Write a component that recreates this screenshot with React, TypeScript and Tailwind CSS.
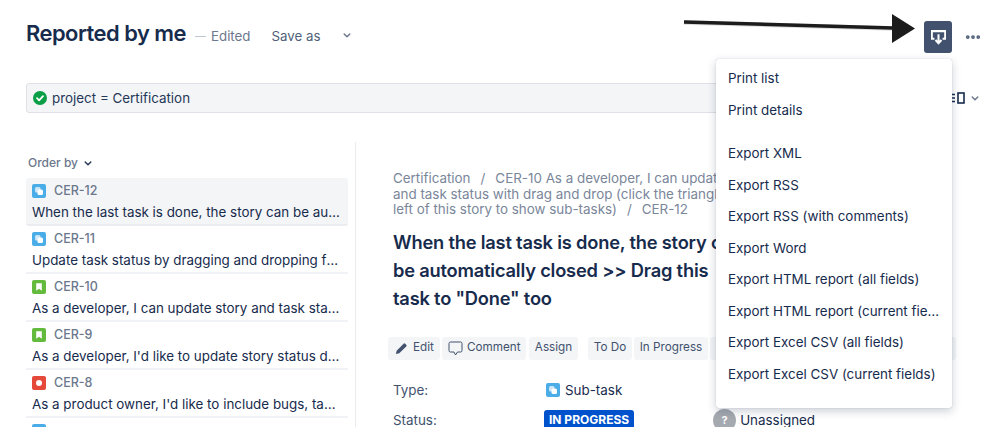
import { MoreHorizontal } from "lucide-react";

const font = "font-['Inter','Noto_Sans',sans-serif]";

type IssueRow = { id: string; title: string; type: "subtask" | "story" | "bug"; selected?: boolean };

const issues: IssueRow[] = [
  { id: "CER-12", title: "When the last task is done, the story can be automatically closed", type: "subtask", selected: true },
  { id: "CER-11", title: "Update task status by dragging and dropping from column", type: "subtask" },
  { id: "CER-10", title: "As a developer, I can update story and task status with drag", type: "story" },
  { id: "CER-9", title: "As a developer, I'd like to update story status during the sprint", type: "story" },
  { id: "CER-8", title: "As a product owner, I'd like to include bugs, tasks and other", type: "bug" },
  { id: "", title: "", type: "subtask" },
];

const menuGroups = [
  ["Print list", "Print details"],
  [
    "Export XML",
    "Export RSS",
    "Export RSS (with comments)",
    "Export Word",
    "Export HTML report (all fields)",
    "Export HTML report (current fields)",
    "Export Excel CSV (all fields)",
    "Export Excel CSV (current fields)",
  ],
];

function Chevron({ className }: { className: string }) {
  return (
    <svg viewBox="0 0 10 6" className={className} fill="none" stroke="currentColor" strokeWidth="1.8" strokeLinecap="round" strokeLinejoin="round">
      <path d="M1.5 1.2 5 4.7l3.5-3.5" />
    </svg>
  );
}

function IssueIcon({ type }: { type: IssueRow["type"] }) {
  const size = "h-[14px] w-[14px] shrink-0";
  if (type === "story") {
    return (
      <svg viewBox="0 0 14 14" className={size}>
        <rect width="14" height="14" rx="2" fill="#63ba3c" />
        <path d="M4.2 3.2h5.6v7.6L7 8.8l-2.8 2z" fill="#fff" />
      </svg>
    );
  }
  if (type === "bug") {
    return (
      <svg viewBox="0 0 14 14" className={size}>
        <rect width="14" height="14" rx="2" fill="#e5493a" />
        <circle cx="7" cy="7" r="3" fill="#fff" />
      </svg>
    );
  }
  return (
    <svg viewBox="0 0 14 14" className={size}>
      <rect width="14" height="14" rx="2" fill="#4bade8" />
      <rect x="3" y="3" width="5.5" height="5.5" rx="1.5" fill="#fff" fillOpacity="0.7" />
      <rect x="5.5" y="5.5" width="5.5" height="5.5" rx="1.5" fill="#fff" />
    </svg>
  );
}

function ToolButton({ children, className = "" }: { children?: React.ReactNode; className?: string }) {
  return (
    <div className={`flex h-[23px] shrink-0 items-center rounded-[3px] bg-[#f4f5f7] text-[11.7px] text-[#42526e] ${className}`}>
      {children}
    </div>
  );
}

export default function App() {
  return (
    <div className={`${font} relative h-[427px] w-[999px] overflow-hidden bg-white text-[#172b4d]`}>
      {/* header */}
      <div className="flex h-[83px] items-start pl-[26px] pt-[17px]">
        <h1 className="w-[161px] whitespace-nowrap text-[21.9px] font-semibold leading-[32px] tracking-[-0.5px] text-[#172b4d]">Reported by me</h1>
        <div className="ml-[8px] mt-[10px] h-px w-[11px] translate-y-[9px] bg-[#c1c7d0]" />
        <span className="ml-[5px] mt-[10px] text-[13.3px] leading-[18px] text-[#6b778c]">Edited</span>
        <span className="ml-[21px] mt-[10px] text-[13.3px] leading-[18px] text-[#505f79]">Save as</span>
        <Chevron className="ml-[23px] mt-[16px] h-[5px] w-[8px] text-[#6b778c]" />
      </div>

      {/* jql bar */}
      <div className="flex items-center">
        <div className="ml-[26px] flex h-[30px] w-[900px] items-center gap-[5px] rounded-[3px] border border-[#dfe1e6] bg-[#f4f5f7] pl-[6px] text-[13.4px] leading-[28px] text-[#253858]">
          <svg viewBox="0 0 14 14" className="h-[14px] w-[14px]">
            <circle cx="7" cy="7" r="7" fill="#0a9e46" />
            <path d="M4 7.2l2.1 2.1L10 5.2" fill="none" stroke="#fff" strokeWidth="1.8" strokeLinecap="round" strokeLinejoin="round" />
          </svg>
          project = Certification
        </div>
        <svg viewBox="0 0 14 12" className="ml-[26px] h-[12px] w-[14px] text-[#172b4d]" fill="none" stroke="currentColor">
          <path d="M0 2.5h3M0 6h3M0 9.5h3" strokeWidth="1.4" />
          <rect x="6" y="1" width="6" height="10" strokeWidth="1.6" />
        </svg>
        <Chevron className="ml-[5px] h-[5px] w-[8px] text-[#6b778c]" />
      </div>

      {/* body */}
      <div className="mt-[29px] flex">
        <div className="ml-[26px] w-[322px] shrink-0">
          <div className="flex h-[36px] items-center gap-[6px] pl-[2px] pt-[6px] text-[12px] font-medium text-[#6b778c]">
            Order by
            <Chevron className="h-[5px] w-[8px] text-[#253858]" />
          </div>
          {issues.map((row, i) => (
            <div
              key={i}
              className={`h-[48px] border-b-2 px-[6px] pt-[6px] ${row.selected ? "rounded-[3px] border-[#ebecf0] bg-[#f4f5f7]" : "border-[#f1f2f5]"}`}
            >
              <div className="flex h-[14px] items-center gap-[8px]">
                <IssueIcon type={row.type} />
                <span className="text-[12.5px] font-medium text-[#6b778c]">{row.id}</span>
              </div>
              <div className="mt-[5px] truncate text-[13.4px] leading-[18px] text-[#172b4d]">{row.title}</div>
            </div>
          ))}
        </div>

        <div className="ml-[7px] h-[300px] w-px shrink-0 bg-[#ebecf0]" />

        <div className="ml-[37px] w-[570px] shrink-0 pt-[29px]">
          <div className="w-[323px] whitespace-nowrap text-[13.4px] leading-[15.5px] text-[#7a869a]">
            <div>Certification<span className="mx-[10px]">/</span>CER-10 As a developer, I can update</div>
            <div>and task status with drag and drop (click the triangle</div>
            <div>left of this story to show sub-tasks)<span className="mx-[10px]">/</span>CER-12</div>
          </div>
          <div className="mt-[10px] w-[323px] whitespace-nowrap text-[18.3px] font-semibold leading-[28px] tracking-[-0.2px] text-[#172b4d]">
            <div>When the last task is done, the story can</div>
            <div>be automatically closed &gt;&gt; Drag this</div>
            <div>task to "Done" too</div>
          </div>
          <div className="ml-[-5px] mt-[25px] flex">
            <ToolButton className="w-[52px] gap-[5px] pl-[7px]">
              <svg viewBox="0 0 14 14" className="h-[13px] w-[13px]" fill="#42526e">
                <path d="M1 13l.8-3.6 7.4-7.5a1.3 1.3 0 0 1 1.8 0l1.1 1.1a1.3 1.3 0 0 1 0 1.8l-7.5 7.4z" />
              </svg>
              Edit
            </ToolButton>
            <ToolButton className="ml-[2px] w-[84px] gap-[4px] pl-[6px]">
              <svg viewBox="0 0 15 15" className="h-[15px] w-[15px]" fill="none" stroke="#42526e" strokeWidth="1">
                <path d="M2.5 1h10A1.5 1.5 0 0 1 14 2.500v7A1.500 1.500 0 0 1 12.500 11H9.500L7.500 14 6 11H2.500A1.500 1.500 0 0 1 1 9.500v-7A1.500 1.500 0 0 1 2.500 1z" />
              </svg>
              Comment
            </ToolButton>
            <ToolButton className="ml-[3px] w-[49px] justify-center">Assign</ToolButton>
            <ToolButton className="ml-[10px] w-[44px] justify-center">To Do</ToolButton>
            <ToolButton className="ml-[2px] w-[74px] justify-center">In Progress</ToolButton>
            <ToolButton className="ml-[2px] w-[246px]" />
          </div>
          <div className="mt-[20px] flex items-center text-[13.4px] leading-[20px]">
            <span className="w-[153px] text-[#42526e]">Type:</span>
            <IssueIcon type="subtask" />
            <span className="ml-[5px] text-[#172b4d]">Sub-task</span>
          </div>
          <div className="mt-[9px] flex items-center text-[13.4px] leading-[20px]">
            <span className="w-[151px] text-[#42526e]">Status:</span>
            <span className="rounded-[3px] bg-[#0052cc] px-[5px] text-[12px] font-bold leading-[20px] text-white">IN PROGRESS</span>
            <span className="ml-[79px] flex h-[23px] w-[23px] shrink-0 items-center justify-center rounded-full bg-[#a5a9b0] text-[11px] font-bold text-white">?</span>
            <span className="ml-[4px] text-[#172b4d]">Unassigned</span>
          </div>
        </div>
      </div>

      {/* annotation arrow */}
      <svg viewBox="0 0 245 32" className="absolute left-[683px] top-[13px] h-[32px] w-[245px]">
        <path d="M1 9.5l209 6" stroke="#9a9a9a" strokeWidth="4.5" strokeOpacity="0.35" fill="none" />
        <path d="M1 9l209 6" stroke="#1c1c1c" strokeWidth="3.5" fill="none" />
        <path d="M209 1l23 14.5L209 30z" fill="#1c1c1c" />
      </svg>

      {/* export button */}
      <div className="absolute left-[924px] top-[21px] flex h-[32px] w-[28px] items-center justify-center rounded-[3px] bg-[#42526e]">
        <svg viewBox="0 0 14 14" className="h-[15px] w-[15px]">
          <path d="M0 0h14v9h-3.200V7.200h1.500V2H1.700v5.200h1.500V9H0z" fill="#fff" />
          <path d="M7 4v8.500M4.200 9.400 7 12.300l2.800-2.900" fill="none" stroke="#fff" strokeWidth="1.900" />
        </svg>
      </div>
      <MoreHorizontal className="absolute left-[964px] top-[28px] h-[18px] w-[18px] text-[#505f79]" strokeWidth={3} />

      {/* export menu */}
      <div className="absolute left-[716px] top-[59px] w-[236px] rounded-[3px] bg-white pb-[18px] pt-[4px] shadow-[0_3px_10px_rgba(9,30,66,0.22),0_0_1px_rgba(9,30,66,0.3)]">
        {menuGroups.map((group, i) => (
          <div key={i} className={i > 0 ? "mt-[12px]" : ""}>
            {group.map((label) => (
              <div key={label} className="h-[31.5px] truncate px-[12px] text-[13.4px] leading-[31.5px] text-[#172b4d]">
                {label}
              </div>
            ))}
          </div>
        ))}
      </div>
    </div>
  );
}
